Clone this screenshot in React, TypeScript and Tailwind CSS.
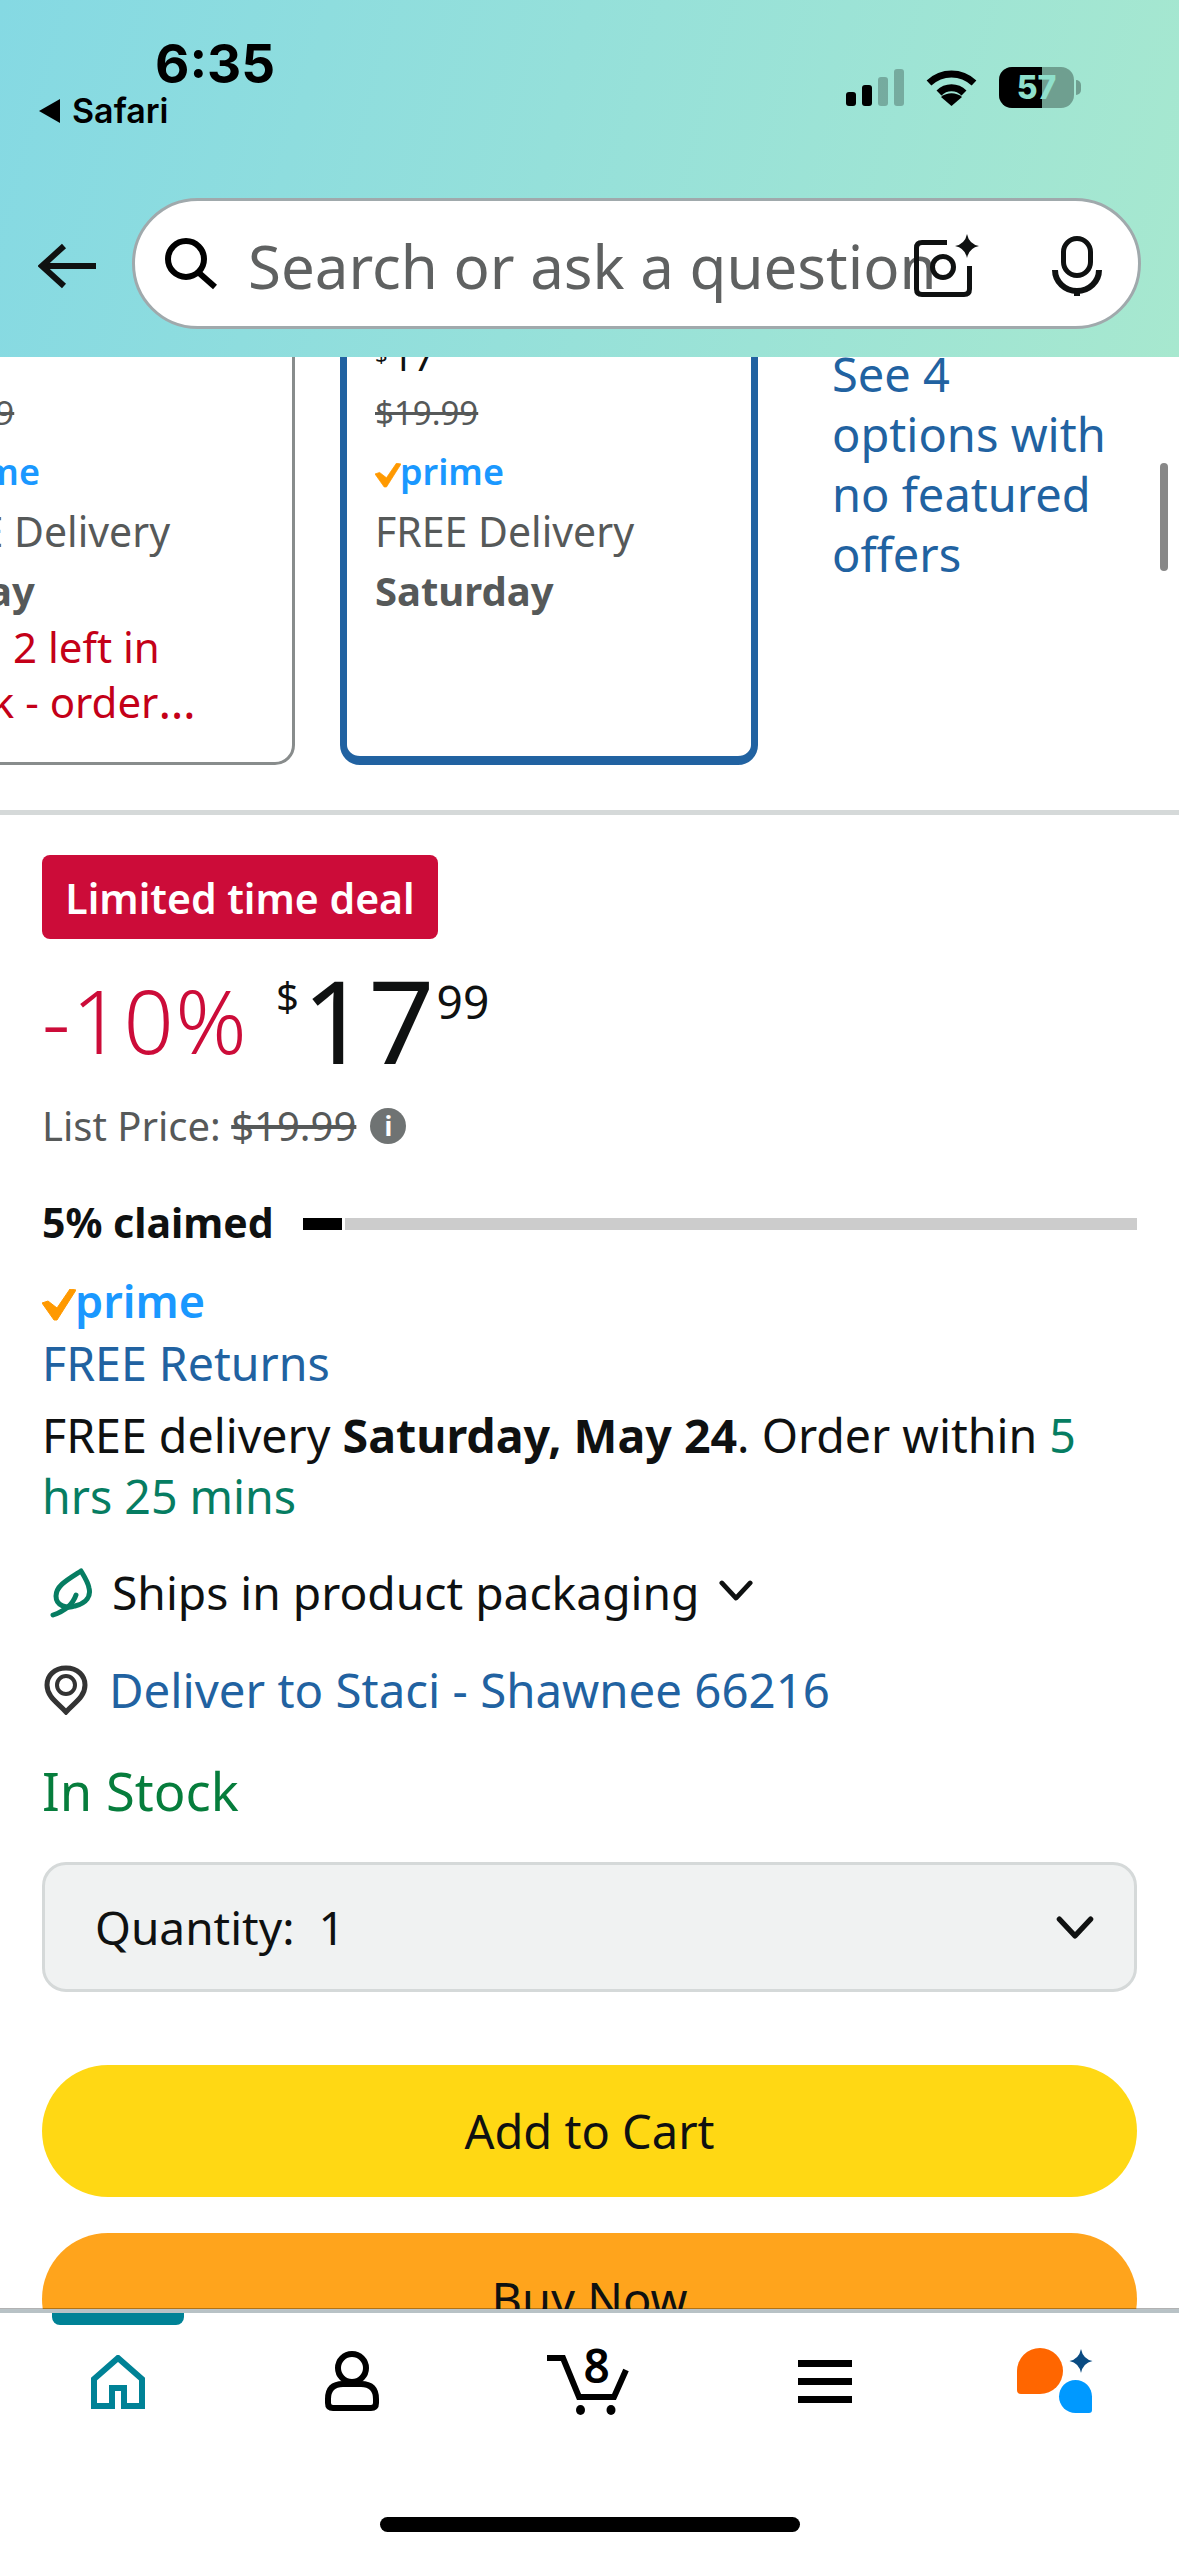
function Prime({ big }: { big?: boolean }) {
  return (
    <span className={big ? 'flex items-center' : 'flex items-center mt-[3px]'}>
      <svg viewBox="0 0 34 32" className={big ? 'w-[34px] h-[32px] mt-[1px]' : 'w-[26px] h-[25px] mt-[1px]'}>
        <path d="M0 14 L6 12 L15 19 L28 0 L34 1 L15 31 L12 31 Z" fill="#ff9900" stroke="#ff9900" strokeWidth="1" strokeLinejoin="round" />
      </svg>
      <span className={big ? "text-[45px] leading-none font-semibold text-[#1a98ff] -mt-[7px] -ml-[1px]" : "text-[36px] leading-none font-semibold text-[#1a98ff] -mt-[6px] -ml-[1px]"}>prime</span>
    </span>
  )
}

function Chevron({ className }: { className: string }) {
  return (
    <svg viewBox="0 0 36 22" className={className} fill="none" stroke="#0f1111" strokeWidth="5" strokeLinecap="round" strokeLinejoin="round">
      <path d="M3 3 L18 19 L33 3" />
    </svg>
  )
}

function StatusBar() {
  return (
    <div className="h-[198px] flex justify-between">
      <div className="pl-[38px] pt-[35px] font-['Inter',sans-serif] text-black">
        <div className="pl-[117px] text-[53px] leading-[58px] font-bold">6:35</div>
        <div className="flex items-center h-[32px] mt-[2px]">
          <svg viewBox="0 0 22 24" className="w-[22px] h-[24px]"><path d="M22 0 V24 L1 12 Z" fill="#000" /></svg>
          <span className="ml-[12px] text-[34px] leading-none font-semibold">Safari</span>
        </div>
      </div>
      <div className="flex items-center h-[41px] mt-[67px] mr-[98px]">
        <svg viewBox="0 0 58 37" className="w-[58px] h-[37px]">
          <rect x="0" y="23" width="10" height="14" rx="3" fill="#000" />
          <rect x="16" y="16" width="10" height="21" rx="3" fill="#000" />
          <rect x="32" y="8" width="10" height="29" rx="3" fill="#000" opacity="0.25" />
          <rect x="48" y="0" width="10" height="37" rx="3" fill="#000" opacity="0.25" />
        </svg>
        <svg viewBox="0 0 51 37" className="w-[51px] h-[37px] ml-[22px]" fill="none" stroke="#000" strokeWidth="7">
          <path d="M3 14 C16 2 35 2 48 14" />
          <path d="M13 24 C20 17 31 17 38 24" />
          <path d="M25.5 37 L15 28 C21 23 30 23 36 28 Z" fill="#000" stroke="none" />
        </svg>
        <div className="ml-[22px] flex items-center">
          <div className="relative w-[75px] h-[41px] rounded-[13px] overflow-hidden bg-[#6f9f90] flex">
            <div className="w-[43px] bg-black" />
            <span className="absolute inset-0 flex items-center justify-center font-['Inter',sans-serif] text-[32px] leading-none font-extrabold text-[#8fe0cb]">57</span>
          </div>
          <div className="w-[5px] h-[15px] ml-[2px] rounded-r-full bg-[#6f9f90]" />
        </div>
      </div>
    </div>
  )
}

function SearchRow() {
  return (
    <div className="flex items-center pl-[38px]">
      <svg viewBox="0 0 58 46" className="w-[58px] h-[46px] mt-[4px]" fill="none" stroke="#0f1111" strokeWidth="6">
        <path d="M58 23 H4" />
        <path d="M26 3 L4 23 L26 43" />
      </svg>
      <div className="ml-[36px] w-[1009px] h-[131px] rounded-full bg-white border-[3px] border-[#a0a9ac] flex items-center pl-[30px] pr-[36px]">
        <svg viewBox="0 0 52 52" className="w-[52px] h-[52px] shrink-0" fill="none" stroke="#000" strokeWidth="6">
          <circle cx="21" cy="21" r="18" />
          <path d="M33 34 L50 49" />
        </svg>
        <span className="ml-[31px] w-[666px] shrink-0 whitespace-nowrap text-[60px] leading-none text-[#5f6161] pt-[5px]">Search or ask a question</span>
        <svg viewBox="0 0 65 64" className="w-[65px] h-[64px] shrink-0 mt-[2px]" fill="none" stroke="#0f1111" strokeWidth="5">
          <path d="M33 9.5 H8 Q2.5 9.5 2.5 15 V56 Q2.5 61.5 8 61.5 H50 Q55.5 61.5 55.5 56 V33" />
          <circle cx="29" cy="34" r="10.5" />
          <path d="M53 1 Q55 11 65 13 Q55 15 53 25 Q51 15 41 13 Q51 11 53 1 Z" fill="#0f1111" stroke="none" />
        </svg>
        <svg viewBox="0 0 50 60" className="w-[50px] h-[60px] shrink-0 ml-[73px] mt-[4px]" fill="none" stroke="#0f1111" strokeWidth="5">
          <rect x="11.5" y="2.5" width="27" height="37" rx="13.5" />
          <path d="M3 34 A22 21 0 0 0 47 34" strokeWidth="6" />
          <path d="M25 54 V60" strokeWidth="6" />
        </svg>
      </div>
    </div>
  )
}

function Cards() {
  return (
    <div className="flex -mt-[60px] h-[468px] text-[41px] text-[#565959]">
      <div className="-ml-[120px] w-[415px] shrink-0 border-[3px] border-[#888c8c] rounded-[20px] pt-[23px] pl-[28px] whitespace-nowrap">
        <div className="h-[60px]" />
        <div className="h-[60px] flex items-center line-through text-[33px]">$19.99</div>
        <div className="h-[60px] flex items-center"><Prime /></div>
        <div className="h-[60px] flex items-center -mt-[1px]">FREE Delivery</div>
        <div className="h-[60px] flex items-center font-bold text-[40px] -mt-[1px]">Friday</div>
        <div className="-mt-[2px] h-[55px] flex items-center text-[#c40018] text-[42px]">
          <span className="-ml-[14px]">Only</span>
          <span className="ml-[25px]">2 left in</span>
        </div>
        <div className="h-[55px] flex items-center text-[#c40018] text-[42px]">stock - order<span className="text-[47px]">…</span></div>
      </div>
      <div className="ml-[45px] w-[418px] shrink-0 border-[7px] border-b-[9px] border-[#2162a1] rounded-[20px] pt-[19px] pl-[28px] whitespace-nowrap">
        <div className="h-[60px] flex items-end text-[#0f1111] text-[38px] leading-none -translate-y-[8px]">
          <span className="text-[22px] self-start mt-[27px]">$</span><span className="ml-[4px]">17</span>
        </div>
        <div className="h-[60px] flex items-center line-through text-[33px]">$19.99</div>
        <div className="h-[60px] flex items-center"><Prime /></div>
        <div className="h-[60px] flex items-center -mt-[1px]">FREE Delivery</div>
        <div className="h-[60px] flex items-center font-bold text-[40px] -mt-[1px]">Saturday</div>
      </div>
      <div className="ml-[74px] pt-[47px] text-[47px] leading-[60px] text-[#2162a1] whitespace-nowrap">
        <div>See 4</div>
        <div>options with</div>
        <div>no featured</div>
        <div>offers</div>
      </div>
    </div>
  )
}

function BuyBox() {
  return (
    <div className="px-[42px] text-[#0f1111]">
      <div className="mt-[40px] w-[396px] h-[84px] rounded-[8px] bg-[#cc0c39] flex items-center justify-center text-[41px] leading-none font-semibold text-white whitespace-nowrap pt-[2px]">Limited time deal</div>
      <div className="h-[141px] flex items-start">
        <span className="mt-[31px] w-[207px] text-[88px] tracking-[1.5px] leading-[100px] font-light text-[#cc0c39] whitespace-nowrap">-10%</span>
        <span className="ml-[27px] mt-[32px] text-[40px] leading-[50px]">$</span>
        <span className="ml-[3px] mt-[24px] text-[116px] leading-[112px]">17</span>
        <span className="ml-[2px] mt-[37px] text-[46px] leading-[50px]">99</span>
      </div>
      <div className="mt-[20px] h-[52px] flex items-center text-[40px] leading-none text-[#565959] whitespace-nowrap">
        List Price:&nbsp;<span className="line-through">$19.99</span>
        <span className="ml-[14px] w-[36px] h-[36px] rounded-full bg-[#6f7373] flex items-center justify-center text-[26px] font-bold text-white">i</span>
      </div>
      <div className="mt-[45px] h-[52px] flex items-center">
        <span className="w-[261px] shrink-0 text-[41px] leading-none font-bold whitespace-nowrap -mt-[2px]">5% claimed</span>
        <div className="w-[39px] h-[12px] mt-[2px] bg-black" />
        <div className="ml-[3px] flex-1 h-[12px] mt-[2px] bg-[#cccccc]" />
      </div>
      <div className="mt-[30px] h-[50px] flex items-center"><Prime big /></div>
      <div className="mt-[9px] h-[50px] flex items-center text-[46.5px] leading-none text-[#2162a1]">FREE Returns</div>
      <p className="mt-[17px] text-[46.5px] leading-[61px] whitespace-nowrap">
        FREE delivery <b className="font-bold">Saturday, May 24</b>. Order within <span className="text-[#067d62]">5</span>
        <br />
        <span className="text-[#067d62]">hrs 25 mins</span>
      </p>
      <div className="mt-[40px] h-[52px] flex items-center text-[46.2px] leading-none">
        <svg viewBox="0 0 46 50" className="ml-[5px] w-[46px] h-[50px]" fill="none" stroke="#067d62" strokeWidth="5" strokeLinecap="round" strokeLinejoin="round">
          <path d="M34 3 C20 12 9 18 9 28 C9 38 20 41 28 38 C40 35 44 28 42 20 C41 14 37 8 34 3 Z" />
          <path d="M29 27 C26 36 18 43 6 47" />
        </svg>
        <span className="ml-[19px] whitespace-nowrap">Ships in product packaging</span>
        <Chevron className="ml-[20px] w-[34px] h-[21px] -mt-[6px]" />
      </div>
      <div className="mt-[45px] h-[52px] flex items-center text-[47.4px] leading-none text-[#2162a1]">
        <svg viewBox="0 0 44 50" className="ml-[2px] w-[44px] h-[50px]" fill="none" stroke="#333" strokeWidth="5">
          <path d="M22 3 C10 3 3 11 3 20 C3 32 14 38 22 47 C30 38 41 32 41 20 C41 11 34 3 22 3 Z" />
          <circle cx="22" cy="20" r="9" strokeWidth="4" />
        </svg>
        <span className="ml-[21px] whitespace-nowrap">Deliver to Staci - Shawnee 66216</span>
      </div>
      <div className="mt-[45px] h-[60px] flex items-center text-[52.5px] leading-none text-[#067d3c]">In Stock</div>
      <div className="mt-[41px] h-[130px] rounded-[24px] border-[3px] border-[#d5d9d9] bg-[#f0f2f2] flex items-center justify-between pl-[50px] pr-[40px]">
        <span className="text-[46px] leading-none">Quantity:&nbsp; 1</span>
        <Chevron className="w-[38px] h-[23px]" />
      </div>
      <div className="mt-[73px] h-[132px] rounded-full bg-[#ffd814] flex items-center justify-center text-[47px] leading-none">Add to Cart</div>
      <div className="mt-[36px] h-[132px] rounded-full bg-[#ffa41c] flex items-center justify-center text-[47px] leading-none">Buy Now</div>
    </div>
  )
}

function BottomNav() {
  return (
    <div className="shrink-0 relative bg-white">
      <div className="h-[1px] -mt-[1px] bg-black/30" />
      <div className="h-[4px] bg-[#b8c2c6]" />
      <div className="grid grid-cols-5 h-[12px]">
        <div className="mx-[52px] bg-[#008296] rounded-b-[8px]" />
      </div>
      <div className="grid grid-cols-5 h-[72px] mt-[20px] items-center justify-items-center">
        <svg viewBox="0 0 54 54" className="w-[54px] h-[54px] mt-[2px]" fill="none" stroke="#008296" strokeWidth="6">
          <path d="M3 51 V24 L27 3 L51 24 V51 H33 V33 H21 V51 Z" />
        </svg>
        <svg viewBox="0 0 54 60" className="w-[54px] h-[60px] -ml-[4px]" fill="none" stroke="#000" strokeWidth="6">
          <circle cx="27" cy="17" r="14" />
          <path d="M8 57 H46 Q51 57 51 52 V48 Q51 33 36 33 H18 Q3 33 3 48 V52 Q3 57 8 57 Z" />
        </svg>
        <div className="relative w-[84px] h-[70px]">
          <svg viewBox="0 0 84 70" className="w-[84px] h-[70px]" fill="none" stroke="#000" strokeWidth="6">
            <path d="M0 12 H16 L32 51 H67 L79 24" />
            <ellipse cx="33.5" cy="64" rx="4.5" ry="5" fill="#000" stroke="none" />
            <ellipse cx="64" cy="64" rx="4.5" ry="5" fill="#000" stroke="none" />
          </svg>
          <span className="absolute left-[36px] -top-[6px] text-[46px] leading-[50px] font-semibold text-black">8</span>
        </div>
        <svg viewBox="0 0 54 43" className="w-[54px] h-[43px]" fill="#000">
          <rect x="0" y="0" width="54" height="7" />
          <rect x="0" y="18" width="54" height="7" />
          <rect x="0" y="36" width="54" height="7" />
        </svg>
        <svg viewBox="0 0 76 66" className="w-[76px] h-[66px] -ml-[12px]">
          <path d="M23 0 A23 23 0 0 1 23 46 H4 Q0 46 0 42 V23 A23 23 0 0 1 23 0 Z" fill="#ff6600" />
          <path d="M58.5 32 A16.5 16.5 0 0 1 75 48.5 V62 Q75 65 72 65 H58.5 A16.5 16.5 0 0 1 58.5 32 Z" fill="#0099ff" />
          <path d="M64 1 Q66 11 75.5 13 Q66 15 64 25 Q62 15 52.5 13 Q62 11 64 1 Z" fill="#0a4b82" />
        </svg>
      </div>
      <div className="mt-[100px] mb-[24px] mx-auto w-[420px] h-[15px] rounded-full bg-black" />
    </div>
  )
}

export default function App() {
  return (
    <div className="w-[1179px] h-[2556px] flex flex-col overflow-hidden bg-white font-['Noto_Sans',sans-serif]">
      <div className="h-[357px] shrink-0 relative z-10 bg-linear-105 from-[#85d9e3] to-[#a7e8cf]">
        <StatusBar />
        <SearchRow />
      </div>
      <div className="relative flex-1 min-h-0 overflow-hidden">
        <Cards />
        <div className="absolute left-[1160px] top-[106px] w-[8px] h-[108px] rounded-full bg-[#888888]" />
        <div className="mt-[45px] h-[5px] bg-[#d5d9d9]" />
        <BuyBox />
      </div>
      <BottomNav />
    </div>
  )
}
